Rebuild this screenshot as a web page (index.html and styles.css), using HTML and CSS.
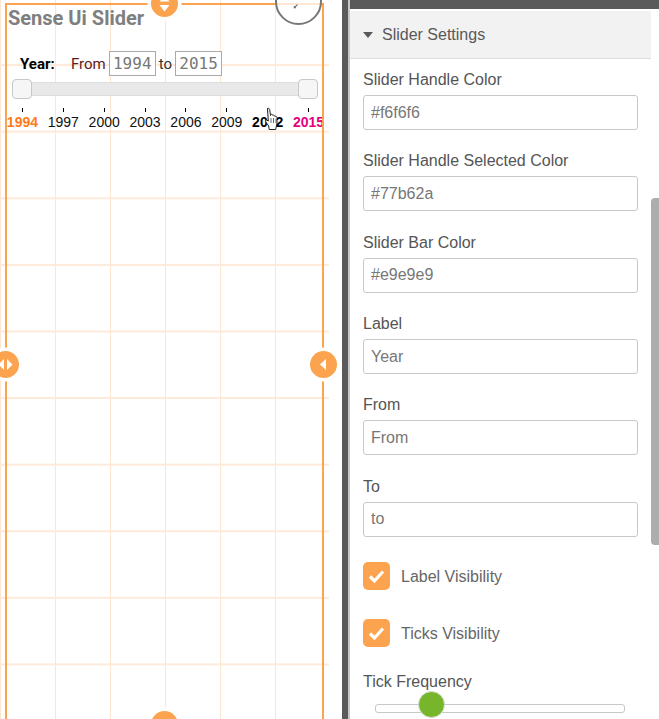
FILE: index.html
```html
<!DOCTYPE html>
<html lang="en">

<head>
    <meta charset="UTF-8">
    <meta name="viewport" content="width=device-width, initial-scale=1.0">
    <title>Sense Ui Slider</title>
    <link rel="stylesheet" href="styles.css">
</head>

<body>
    <div class="editor">
        <section class="canvas">
            <div class="grid"></div>
            <div class="frame">
                <h1 class="object-title">Sense Ui Slider</h1>
                <div class="range-row">
                    <span class="range-label">Year:</span>
                    <span class="range-from">From</span>
                    <span class="range-box">1994</span>
                    <span class="range-to">to</span>
                    <span class="range-box">2015</span>
                </div>
                <div class="track">
                    <span class="thumb"></span>
                    <span class="thumb"></span>
                </div>
                <div class="ticks">
                    <div class="tick tick-start">1994</div>
                    <div class="tick">1997</div>
                    <div class="tick">2000</div>
                    <div class="tick">2003</div>
                    <div class="tick">2006</div>
                    <div class="tick">2009</div>
                    <div class="tick tick-bold">2012</div>
                    <div class="tick tick-end">2015</div>
                </div>
            </div>

            <span class="handle handle-top">
                <svg viewBox="0 0 27 27" width="27" height="27"><path d="M8.500 11.500 13.500 6l5 5.500zM8.500 15h10l-5 6.500z" fill="#fff"/></svg>
            </span>
            <span class="handle handle-left">
                <svg viewBox="0 0 27 27" width="27" height="27"><path d="M12 8v11L6.500 13.500zM15 8v11l5.500-5.500z" fill="#fff"/></svg>
            </span>
            <span class="handle handle-right">
                <svg viewBox="0 0 27 27" width="27" height="27"><path d="M16 8v11L10 13.500z" fill="#fff"/></svg>
            </span>
            <span class="handle handle-bottom"></span>

            <span class="corner">
                <svg class="corner-arrow" viewBox="0 0 8 8" width="6" height="6"><path d="M1 7V3.500L2.300 4.800 5.500 1.500 6.500 2.500 3.300 5.800 4.600 7z" fill="#666"/></svg>
            </span>

            <svg class="cursor" viewBox="0 0 15 24" width="15" height="24">
                <path d="M3.500 1.500c1-.7 2 0 2.200 1l.8 6 .4-1c1-.5 1.900 0 2 .9 1-.5 1.900 0 2 1 1-.3 2 .2 2.100 1.200v5.400l-1.300 6.500H5.200L4.700 19 1.800 14.800c-.6-1 .2-2 1.200-1.700l1.300 1z" fill="#fff" stroke="#222" stroke-width="1"/>
                <path d="M7 11v5M9.500 11v5M12 11.500V16" stroke="#444" stroke-width=".8" fill="none"/>
            </svg>
        </section>

        <div class="divider"></div>

        <aside class="panel">
            <div class="panel-top"></div>
            <div class="panel-body">
                <div class="section-head">
                    <span class="caret"></span>
                    <span>Slider Settings</span>
                </div>
                <div class="fields">
                    <div class="field">
                        <label>Slider Handle Color</label>
                        <input type="text" value="#f6f6f6">
                    </div>
                    <div class="field">
                        <label>Slider Handle Selected Color</label>
                        <input type="text" value="#77b62a">
                    </div>
                    <div class="field">
                        <label>Slider Bar Color</label>
                        <input type="text" value="#e9e9e9">
                    </div>
                    <div class="field">
                        <label>Label</label>
                        <input type="text" value="Year">
                    </div>
                    <div class="field">
                        <label>From</label>
                        <input type="text" value="From">
                    </div>
                    <div class="field">
                        <label>To</label>
                        <input type="text" value="to">
                    </div>
                    <div class="check-row">
                        <span class="check">
                            <svg viewBox="0 0 27 28" width="27" height="28"><path d="M7 14.500l4.500 4.500L20 9.500" fill="none" stroke="#fff" stroke-width="3.200"/></svg>
                        </span>
                        <span class="check-text">Label Visibility</span>
                    </div>
                    <div class="check-row">
                        <span class="check">
                            <svg viewBox="0 0 27 28" width="27" height="28"><path d="M7 14.500l4.500 4.500L20 9.500" fill="none" stroke="#fff" stroke-width="3.200"/></svg>
                        </span>
                        <span class="check-text">Ticks Visibility</span>
                    </div>
                    <div class="range-field">
                        <label>Tick Frequency</label>
                        <div class="freq-track"><span class="freq-thumb"></span></div>
                    </div>
                </div>
            </div>
            <div class="scrollbar"></div>
        </aside>
    </div>
</body>

</html>
```

FILE: styles.css
```css
* {
    box-sizing: border-box;
}

html,
body {
    margin: 0;
    padding: 0;
    height: 100%;
    overflow: hidden;
}

body {
    font-family: "Liberation Sans", Arial, sans-serif;
    background-color: white;
}

.editor {
    display: flex;
    width: 659px;
    height: 719px;
}

/* left side */
.canvas {
    position: relative;
    flex: 0 0 342px;
    overflow: hidden;
    background-color: white;
}

.grid {
    position: absolute;
    top: 0;
    left: 0;
    width: 329px;
    height: 100%;
    background-image:
        linear-gradient(#fdeada 1.500px, transparent 1.500px),
        linear-gradient(90deg, #fde6d0 1px, transparent 1px);
    background-size: 100% 66.600px, 55px 100%;
    background-position: 0 -2.500px, 0 0;
}

.frame {
    position: absolute;
    top: 3px;
    left: 5px;
    width: 319px;
    height: 730px;
    border: 2px solid #fba34f;
    overflow: hidden;
}

.object-title {
    margin: 0;
    padding: 1px 0 0 1px;
    font-family: Roboto, "Liberation Sans", sans-serif;
    font-size: 20px;
    line-height: 24px;
    font-weight: 700;
    color: #7f7f7f;
}

.range-row {
    display: flex;
    align-items: center;
    height: 25px;
    margin-top: 21px;
    padding-left: 13px;
    font-family: Roboto, "Liberation Sans", sans-serif;
    font-size: 15px;
    color: #5c1a1a;
}

.range-label {
    width: 51px;
    font-weight: 700;
    color: black;
}

.range-from {
    margin-right: 3px;
}

.range-to {
    margin: 0 3px;
    color: #333;
}

.range-box {
    width: 47px;
    height: 25px;
    border: 1px solid #aaa;
    font-family: "DejaVu Sans Mono", monospace;
    font-size: 16px;
    line-height: 23px;
    text-align: center;
    color: #777;
    background-color: white;
}

.track {
    display: flex;
    justify-content: space-between;
    align-items: center;
    width: 306px;
    height: 14px;
    margin: 6px 0 0 5px;
    background-color: #e9e9e9;
    border: 1px solid #dcdcdc;
    border-radius: 2px;
}

.thumb {
    flex: none;
    width: 20px;
    height: 20px;
    margin: -3px -1px;
    background-color: #f6f6f6;
    border: 1px solid #c8c8c8;
    border-radius: 4px;
}

.ticks {
    display: flex;
    width: 327px;
    margin: 12px 0 0 -5px;
}

.tick {
    flex: 1 1 0;
    padding-top: 5px;
    text-align: center;
    font-size: 14px;
    line-height: 18px;
    color: #111;
}

.tick::before {
    content: "";
    display: block;
    width: 1px;
    height: 4px;
    margin: -5px auto 1px;
    background-color: black;
}

.tick-start {
    font-weight: 700;
    color: #ff7a1a;
}

.tick-bold {
    font-weight: 700;
    color: black;
}

.tick-end {
    font-weight: 700;
    color: #e6007e;
}

/* drag handles, they sit over the frame */
.handle {
    position: absolute;
    width: 27px;
    height: 27px;
    border-radius: 50%;
    background-color: #fba34f;
    box-shadow: 0 0 0 3.500px white;
}

.handle svg {
    display: block;
}

.handle-top {
    top: -10px;
    left: 151px;
}

.handle-left {
    top: 351px;
    left: -8px;
}

.handle-right {
    top: 351px;
    left: 310px;
}

.handle-bottom {
    top: 711px;
    left: 151px;
}

.corner {
    position: absolute;
    top: -22px;
    left: 275px;
    width: 47px;
    height: 47px;
    border: 2px solid #777;
    border-radius: 50%;
    background-color: rgba(255, 255, 255, 0.75);
}

.corner-arrow {
    position: absolute;
    top: 23px;
    left: 16px;
}

.cursor {
    position: absolute;
    top: 107px;
    left: 264px;
}

/* middle bar */
.divider {
    flex: 0 0 8px;
    background-color: #5a5a5a;
    border-right: 2px solid #c8c8c8;
}

/* right side */
.panel {
    position: relative;
    flex: 1;
    display: flex;
    flex-direction: column;
    background-color: white;
}

.panel-top {
    flex: 0 0 11px;
    background-color: #5a5a5a;
    border-bottom: 2px solid white;
}

.panel-body {
    flex: 1;
    margin-right: 8px;
    overflow: hidden;
}

.section-head {
    display: flex;
    align-items: center;
    height: 48px;
    padding-left: 13px;
    background-color: #f2f2f2;
    border-bottom: 1px solid #ddd;
    font-size: 16px;
    color: #595959;
}

.caret {
    width: 0;
    height: 0;
    margin-right: 9px;
    border-left: 5px solid transparent;
    border-right: 5px solid transparent;
    border-top: 6px solid #595959;
}

.fields {
    display: flex;
    flex-direction: column;
    padding: 12px 13px 0;
}

.field {
    display: flex;
    flex-direction: column;
    gap: 6px;
    flex: 0 0 81.350px;
}

label {
    display: block;
    font-size: 16px;
    line-height: 18px;
    color: #555;
}

input {
    width: 100%;
    height: 35px;
    padding: 0 7px;
    border: 1px solid #c8c8c8;
    border-radius: 3px;
    font-family: "Liberation Sans", Arial, sans-serif;
    font-size: 16px;
    color: #777;
    background-color: white;
}

.check-row {
    display: flex;
    align-items: center;
    gap: 11px;
    flex: 0 0 28px;
    margin-bottom: 29px;
    font-size: 16px;
    color: #666;
}

.field + .check-row {
    margin-top: 2.900px;
}

.check {
    flex: none;
    width: 27px;
    height: 28px;
    background-color: #fba34f;
    border-radius: 5px;
}

.check svg {
    display: block;
}

.check-text {
    padding-top: 2px;
}

.range-field {
    margin-top: -3px;
}

.range-field label {
    margin-bottom: 13px;
}

.freq-track {
    position: relative;
    width: 250px;
    height: 9px;
    margin-left: 12px;
    border: 1px solid #c8c8c8;
    border-radius: 3px;
    background-color: white;
}

.freq-thumb {
    position: absolute;
    top: -14px;
    left: 42px;
    width: 27px;
    height: 27px;
    border: 1px solid #ddd;
    border-radius: 50%;
    background-color: #77b62a;
}

.scrollbar {
    position: absolute;
    top: 198px;
    right: 0;
    width: 8px;
    height: 347px;
    background-color: #adadad;
    border-radius: 4px 0 0 4px;
}
```
